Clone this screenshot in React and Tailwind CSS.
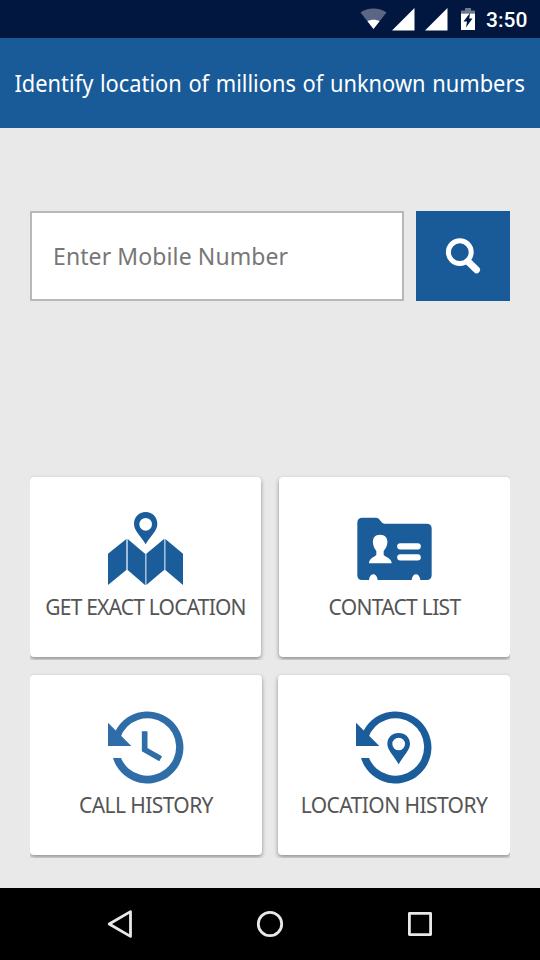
import React from 'react';

const SignalIcon = () => (
  <svg width="23" height="23" viewBox="0 0 23 23">
    <path d="M22.5 0V22.5H0z" fill="#fff" />
  </svg>
);

const StatusBar = () => (
  <div className="h-[38px] shrink-0 bg-[#01173f] flex items-center pl-[360px]">
    <svg width="27" height="22" viewBox="0 0 27 22">
      <path d="M0.5 4.5C7.5 -1 19.5 -1 26.5 4.5L13.5 21z" fill="#5b6685" />
      <path d="M7.5 13.3C10.5 11.3 16.5 11.3 19.5 13.3L13.5 21z" fill="#fff" />
    </svg>
    <div className="ml-[5px]"><SignalIcon /></div>
    <div className="ml-[10px]"><SignalIcon /></div>
    <svg className="ml-[12px]" width="16" height="23" viewBox="0 0 16 23">
      <path d="M1 2.5H5V0H11V2.5H15V5.5H1z" fill="#6d7792" />
      <path d="M1 5.5H15V22H1z" fill="#fff" />
      <path d="M10 5L3.5 13.5H7L6 19.5L12.5 10.5H9.3z" fill="#01173f" />
    </svg>
    <span className="ml-[10px] font-['Roboto'] font-medium text-[21px] leading-none text-white relative top-[1px]">3:50</span>
  </div>
);

const MapIcon = () => (
  <svg width="75" height="75" viewBox="39 15 225 225" fill="#1b5c9b">
    <path fillRule="evenodd" d="M152 21C131 21 117 37 117 57C117 78 136 90 152 118C168 90 187 78 187 57C187 37 173 21 152 21zM152 39A19 19 0 1 1 152 77A19 19 0 1 1 152 39z" />
    <path d="M39 146L94 102V195L39 240zM98 102L150 146V240L98 195zM154 146L207 102V195L154 240zM211 102L264 146V240L211 195z" />
    <path d="M96 102V195M152 146V240M209 102V195" stroke="#8db3d5" strokeWidth="3" />
  </svg>
);

const ContactIcon = () => (
  <svg width="75" height="75" viewBox="36 15 225 225">
    <path
      d="M53 38H92C106 38 106 54 118 56H245Q260 56 260 71V210Q260 225 245 225H226C224 202 202 202 200 225H98C96 202 74 202 72 225H51Q37 225 37 211V53Q37 38 53 38z"
      fill="#1b5c9b"
    />
    <path d="M105 89C90 89 82 99 84 115C85 127 90 132 94 138V149C88 157 72 159 72 175H140C140 159 122 157 116 149V138C120 132 126 127 127 115C129 99 120 89 105 89z" fill="#fff" />
    <path d="M166 124H218M166 157H218" stroke="#fff" strokeWidth="19" strokeLinecap="round" />
  </svg>
);

// circular arrow shared by both history tiles
const HistoryIcon = ({ color, children }) => (
  <svg width="76" height="76" viewBox="39 30 228 228">
    <path d="M54 171A108 108 0 1 0 56 102L76 110A86 86 0 1 1 78 171z" fill={color} />
    <path d="M39 65L109 135H39z" fill={color} />
    {children}
  </svg>
);

const CallHistoryIcon = () => (
  <HistoryIcon color="#2f6da8">
    <path d="M149 91V146L197 173" fill="none" stroke="#2f6da8" strokeWidth="17" />
  </HistoryIcon>
);

const LocationHistoryIcon = () => (
  <HistoryIcon color="#1b5c9b">
    <path fill="#1b5c9b" fillRule="evenodd" d="M167 96C147 96 133 110 133 129C133 148 153 164 167 190C181 164 201 148 201 129C201 110 187 96 167 96zM167 110A19 19 0 1 1 167 148A19 19 0 1 1 167 110z" />
  </HistoryIcon>
);

const Tile = ({ icon, label, iconClass, textClass }) => (
  <div className="flex-1 min-w-0 h-[180px] bg-white rounded-[4px] shadow-[0_2px_4px_rgba(0,0,0,0.4)] flex flex-col items-center">
    <div className={`mt-[33px] h-[82px] ${iconClass}`}>{icon}</div>
    <span className={`text-[21px] leading-[30px] whitespace-nowrap text-[#555] ${textClass}`}>{label}</span>
  </div>
);

const NavBar = () => (
  <div className="h-[72px] shrink-0 bg-black grid grid-cols-[150px_150px_150px] justify-center items-center justify-items-center">
    <svg width="30" height="30" viewBox="0 0 30 30" fill="none" stroke="#e8e8e8" strokeWidth="2.8" strokeLinejoin="round">
      <path d="M4.2 15L25.5 2.6V27.4z" />
    </svg>
    <svg width="30" height="30" viewBox="0 0 30 30" fill="none" stroke="#e8e8e8" strokeWidth="2.8">
      <circle cx="15" cy="15" r="11.7" />
    </svg>
    <svg width="30" height="30" viewBox="0 0 30 30" fill="none" stroke="#e8e8e8" strokeWidth="2.8" strokeLinejoin="round">
      <path d="M4.4 4.4H25.6V25.6H4.4z" />
    </svg>
  </div>
);

const App = () => {
  return (
    <div className="w-[540px] h-[960px] overflow-hidden flex flex-col bg-[#e9e9e9] font-['Noto_Sans',sans-serif]">
      <StatusBar />
      <header className="h-[90px] shrink-0 bg-[#195a98] flex items-center justify-center">
        <h1 className="text-[23px] leading-[32px] [word-spacing:1px] scale-x-[0.95] whitespace-nowrap text-white">Identify location of millions of unknown numbers</h1>
      </header>

      <main className="flex-1 px-[30px]">
        <div className="mt-[83px] flex gap-3 h-[90px]">
          <input
            className="w-[374px] h-full bg-white border-2 border-[#b7b9b9] pl-[21px] text-[23px] tracking-[0.1px] placeholder:text-[#777] outline-none"
            placeholder="Enter Mobile Number"
          />
          <button className="flex-1 bg-[#195a98] flex items-center justify-center">
            <svg width="36" height="38" viewBox="0 0 36 38" fill="none" stroke="#fff">
              <circle cx="14.8" cy="15.2" r="11.4" strokeWidth="5" />
              <path d="M23 24.5L31.5 32.8" strokeWidth="7" strokeLinecap="round" />
            </svg>
          </button>
        </div>

        <div className="mt-[173px] flex gap-[18px] overflow-hidden pt-[3px] pb-[3px]">
          <Tile icon={<MapIcon />} label="GET EXACT LOCATION" textClass="tracking-[-0.8px]" />
          <Tile icon={<ContactIcon />} label="CONTACT LIST" textClass="tracking-[-0.7px]" />
        </div>
        <div className="mt-[12px] flex gap-[16px] overflow-hidden pt-[3px] pb-[3px]">
          <Tile icon={<CallHistoryIcon />} label="CALL HISTORY" iconClass="pt-[3px]" textClass="tracking-[-0.6px]" />
          <Tile icon={<LocationHistoryIcon />} label="LOCATION HISTORY" iconClass="pt-[3px]" textClass="tracking-[-0.57px]" />
        </div>
      </main>

      <NavBar />
    </div>
  );
};

export default App;
